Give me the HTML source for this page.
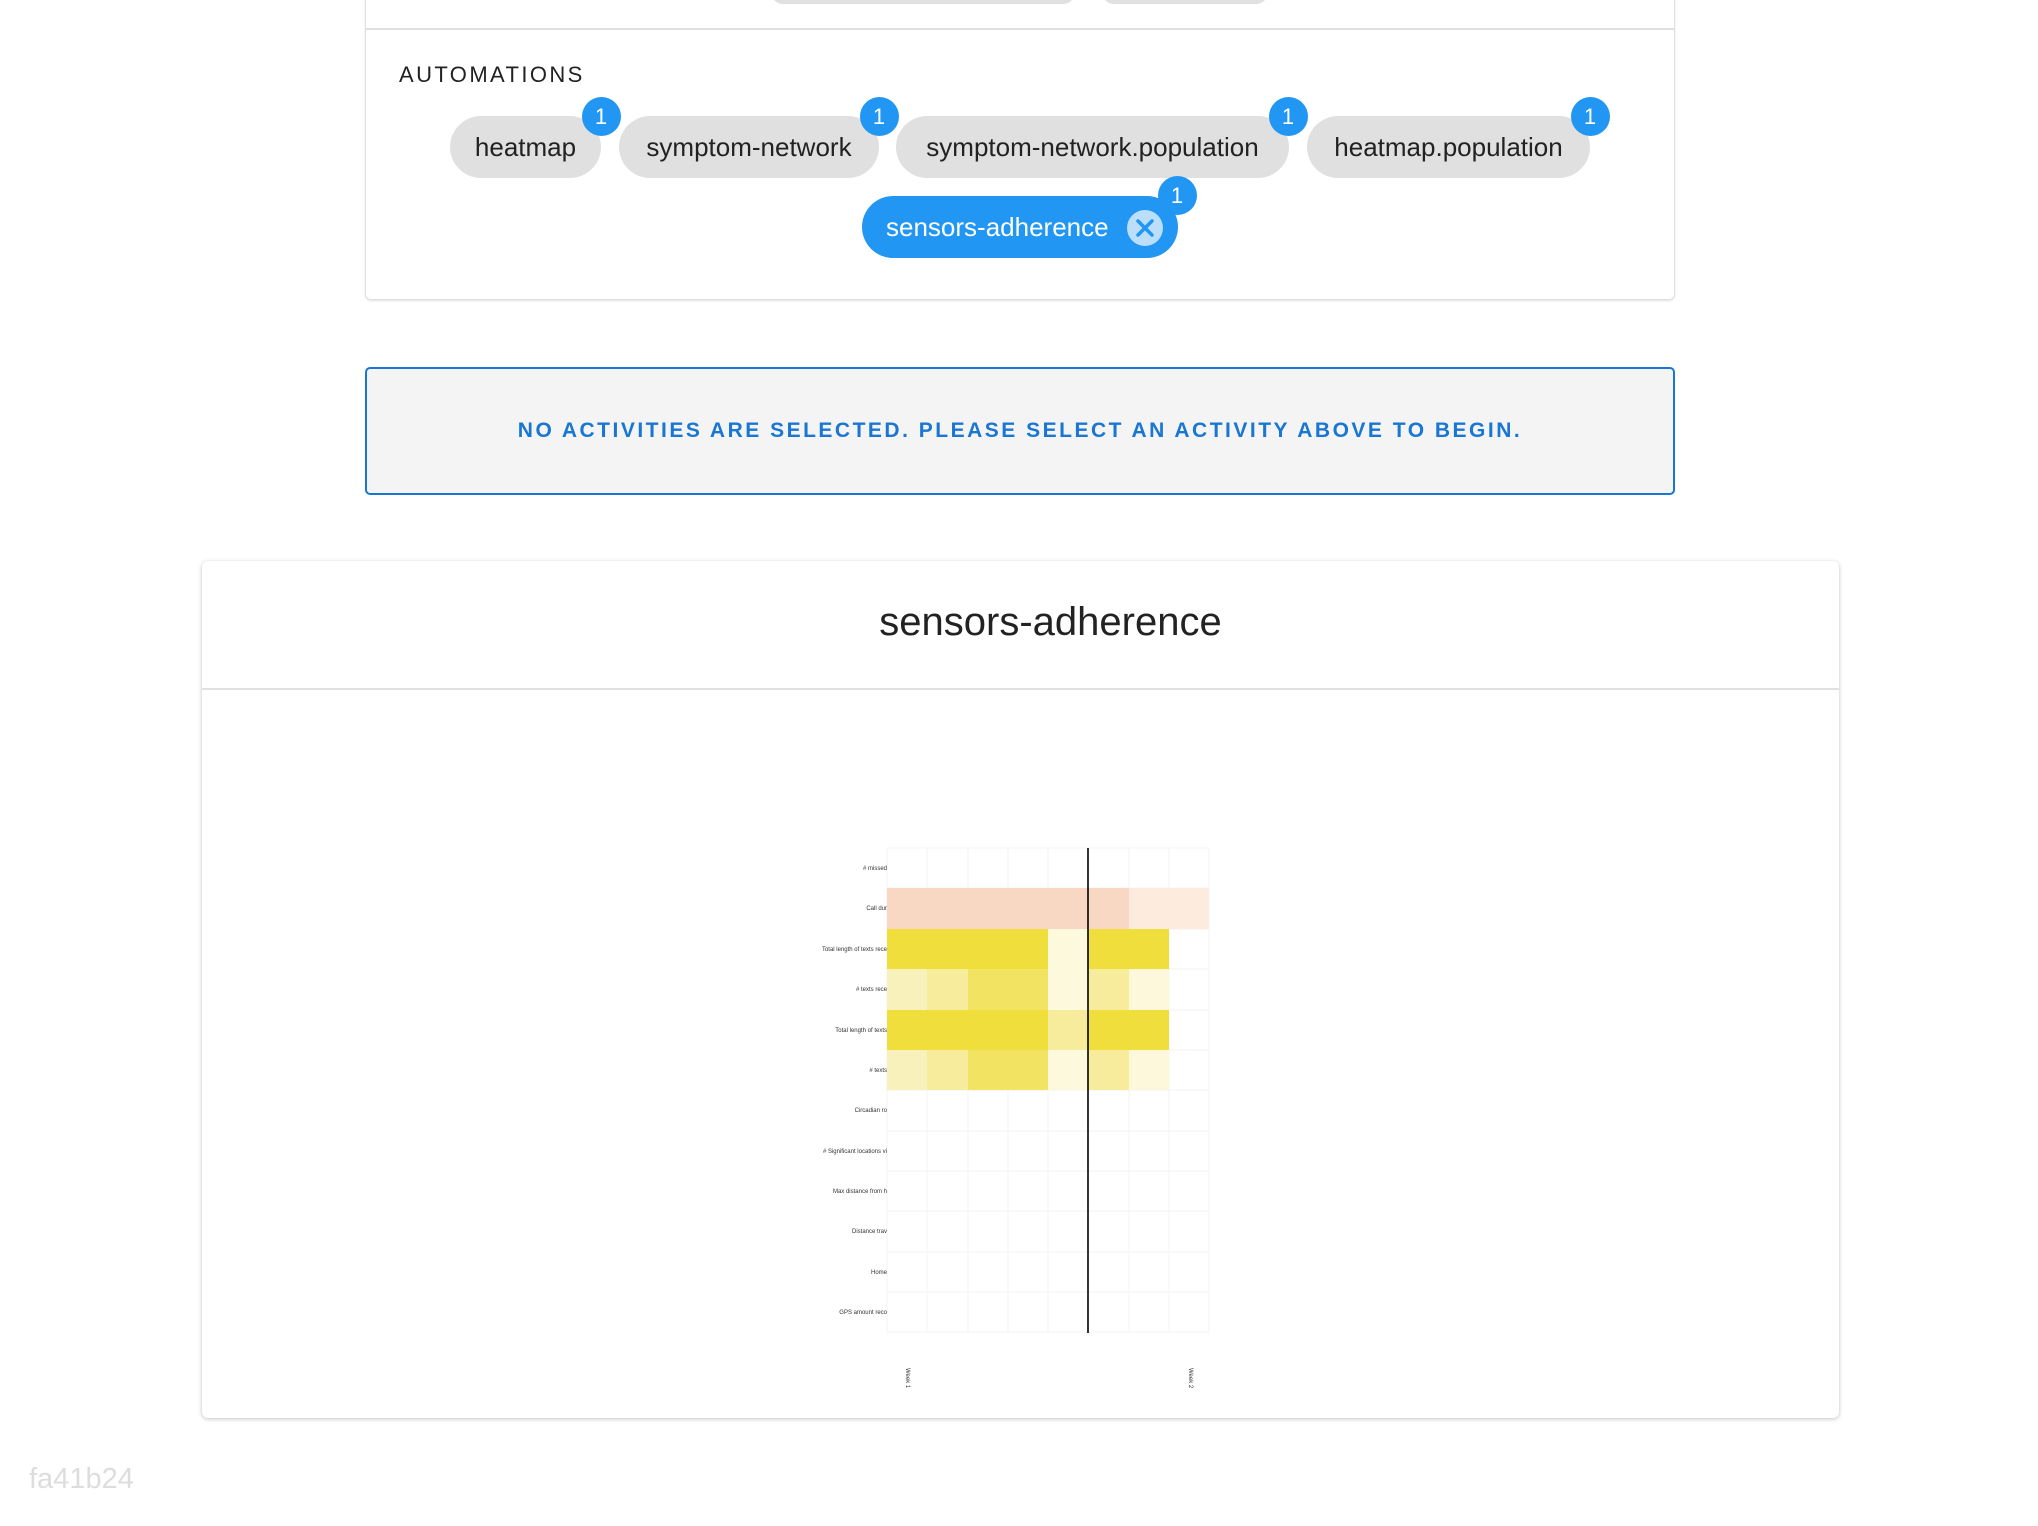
<!DOCTYPE html>
<html><head><meta charset="utf-8"><style>
*{box-sizing:border-box;margin:0;padding:0}
body{width:2038px;height:1526px;background:#fff;font-family:"Liberation Sans",Arial,sans-serif;position:relative;overflow:hidden}
.abs{position:absolute}
.card1{left:365px;top:-10px;width:1310px;height:310px;border:1px solid #e0e0e0;border-radius:6px;box-shadow:0 1px 2px rgba(0,0,0,.12)}
.chip{position:absolute;height:62px;border-radius:31px;background:#e0e0e0;color:#222;font-size:26px;line-height:62px;text-align:center}
.badge{position:absolute;width:39px;height:39px;border-radius:50%;background:#2196f3;color:#fff;font-size:22px;line-height:39px;text-align:center;margin:-19.5px 0 0 -19.5px}
</style></head><body>
<div class="abs card1"></div>
<div class="abs" style="left:366px;top:28px;width:1308px;height:2px;background:#e0e0e0"></div>
<div class="abs" style="left:771px;top:-20px;width:304px;height:24px;border-radius:12px;background:#e0e0e0"></div>
<div class="abs" style="left:1102px;top:-20px;width:166px;height:24px;border-radius:12px;background:#e0e0e0"></div>
<div class="abs" style="left:399px;top:62px;font-size:22px;letter-spacing:2.4px;color:#222">AUTOMATIONS</div>
<div class="chip" style="left:450px;top:116px;width:151px">heatmap</div>
<div class="chip" style="left:619px;top:116px;width:260px">symptom-network</div>
<div class="chip" style="left:896px;top:116px;width:393px">symptom-network.population</div>
<div class="chip" style="left:1307px;top:116px;width:283px">heatmap.population</div>
<div class="chip" style="left:862px;top:196px;width:316px;background:#2196f3;color:#fff;text-align:left;padding-left:24px">sensors-adherence</div>
<div class="abs" style="left:1127px;top:210px;width:36px;height:36px;border-radius:50%;background:#bbdefb"><svg width="36" height="36"><path d="M11 11L25 25M25 11L11 25" stroke="#2196f3" stroke-width="3.5" stroke-linecap="round"/></svg></div>
<div class="badge" style="left:601px;top:116px">1</div>
<div class="badge" style="left:879px;top:116px">1</div>
<div class="badge" style="left:1288px;top:116px">1</div>
<div class="badge" style="left:1590px;top:116px">1</div>
<div class="badge" style="left:1177px;top:195px">1</div>
<div class="abs" style="left:365px;top:367px;width:1310px;height:128px;border:2px solid #1976d2;border-radius:5px;background:#f4f4f4;color:#1976d2;font-weight:bold;font-size:21px;letter-spacing:2.5px;text-align:center;line-height:124px">NO ACTIVITIES ARE SELECTED. PLEASE SELECT AN ACTIVITY ABOVE TO BEGIN.</div>
<div class="abs" style="left:202px;top:561px;width:1637px;height:857px;border-radius:6px;box-shadow:0 1px 4px rgba(0,0,0,.25);background:#fff"></div>
<div class="abs" style="left:232px;top:600px;width:1637px;text-align:center;font-size:40px;font-weight:500;color:#222">sensors-adherence</div>
<div class="abs" style="left:202px;top:688px;width:1637px;height:2px;background:#e0e0e0"></div>
<svg class="abs" style="left:0;top:0" width="2038" height="1526">
<g stroke="#f3f3f3" stroke-width="1">
<path d="M887 848V1332M927 848V1332M968 848V1332M1008 848V1332M1048 848V1332M1129 848V1332M1169 848V1332M1209 848V1332"/>
<path d="M887 848H1209M887 888H1209M887 929H1209M887 969H1209M887 1010H1209M887 1050H1209M887 1090H1209M887 1131H1209M887 1171H1209M887 1211H1209M887 1252H1209M887 1292H1209M887 1332H1209"/>
</g>
<g>
<rect x="887" y="888" width="202" height="41" fill="#f9d8c3"/><rect x="1089" y="888" width="40" height="41" fill="#f9d8c3"/><rect x="1129" y="888" width="80" height="41" fill="#fdebdd"/>
<rect x="887" y="929" width="161" height="40" fill="#f0de3c"/><rect x="1048" y="929" width="40" height="40" fill="#fdf9dc"/><rect x="1088" y="929" width="81" height="40" fill="#f0de3c"/>
<rect x="887" y="969" width="40" height="41" fill="#f8f1bc"/><rect x="927" y="969" width="41" height="41" fill="#f6ec9c"/><rect x="968" y="969" width="80" height="41" fill="#f2e363"/><rect x="1048" y="969" width="40" height="41" fill="#fdf9dc"/><rect x="1088" y="969" width="41" height="41" fill="#f6ec9c"/><rect x="1129" y="969" width="40" height="41" fill="#fdf8dc"/>
<rect x="887" y="1010" width="161" height="40" fill="#f0de3c"/><rect x="1048" y="1010" width="40" height="40" fill="#f6ec9c"/><rect x="1088" y="1010" width="81" height="40" fill="#f0de3c"/>
<rect x="887" y="1050" width="40" height="40" fill="#f8f1bc"/><rect x="927" y="1050" width="41" height="40" fill="#f6ec9c"/><rect x="968" y="1050" width="80" height="40" fill="#f2e363"/><rect x="1048" y="1050" width="40" height="40" fill="#fdf9dc"/><rect x="1088" y="1050" width="41" height="40" fill="#f6ec9c"/><rect x="1129" y="1050" width="40" height="40" fill="#fdf8dc"/>
</g>
<path d="M1088 848V1333" stroke="#000" stroke-width="1.6"/>
<g font-size="6" fill="#333" text-anchor="end" font-family="Liberation Sans">
<text x="887" y="870"># missed</text><text x="887" y="910">Call dur</text><text x="887" y="951">Total length of texts rece</text><text x="887" y="991"># texts rece</text><text x="887" y="1032">Total length of texts</text><text x="887" y="1072"># texts</text><text x="887" y="1112">Circadian ro</text><text x="887" y="1153"># Significant locations vi</text><text x="887" y="1193">Max distance from h</text><text x="887" y="1233">Distance trav</text><text x="887" y="1274">Home</text><text x="887" y="1314">GPS amount reco</text>
</g>
<g font-size="6" fill="#333" font-family="Liberation Sans">
<text transform="translate(906,1368) rotate(90)">Week 1</text>
<text transform="translate(1189,1368) rotate(90)">Week 2</text>
</g>
</svg>
<div class="abs" style="left:29px;top:1463px;font-size:29px;color:#ddd">fa41b24</div>
</body></html>
